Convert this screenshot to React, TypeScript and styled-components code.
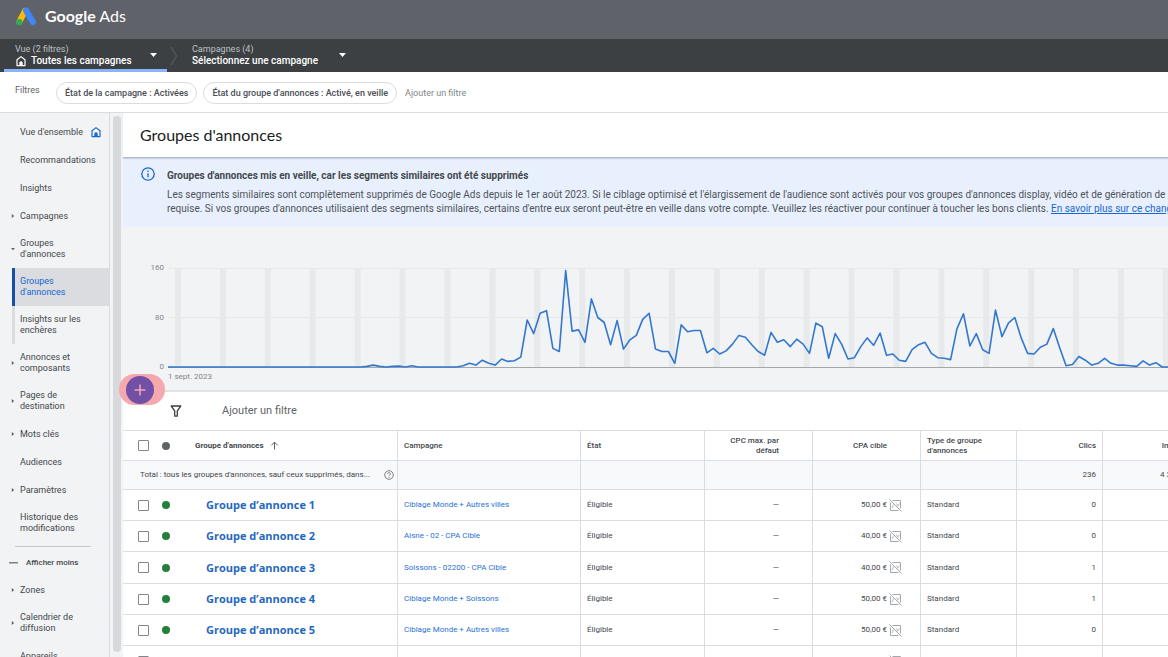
import React from 'react';
import styled, { createGlobalStyle, css } from 'styled-components';

const GlobalStyle = createGlobalStyle`
  *, *::before, *::after { box-sizing: border-box; }
  body {
    margin: 0;
    background: #f1f3f4;
    color: #44484c;
    font: 9px/12px Roboto, 'Liberation Sans', sans-serif;
  }
  button {
    margin: 0;
    padding: 0;
    border: 0;
    background: none;
    color: inherit;
    font: inherit;
    text-align: left;
    cursor: pointer;
  }
  a { color: inherit; text-decoration: none; }
  svg { display: block; flex: none; }
`;

const Shell = styled.div`
  display: flex;
  flex-direction: column;
  height: 100vh;
  overflow: hidden;
`;

/* ---------- top bars ---------- */

const Header = styled.header`
  display: flex;
  flex: none;
  align-items: center;
  gap: 9px;
  height: 39px;
  padding: 0 16px 7px;
  background: #5f6269;
  color: #fff;
`;

const Brand = styled.span`
  font: 400 16px/20px Lato, Roboto, sans-serif;
  strong { font-weight: 700; }
`;

const ScopeBar = styled.nav`
  display: flex;
  flex: none;
  align-items: stretch;
  height: 33px;
  padding-left: 4px;
  background: #3c4043;
`;

const ScopeButton = styled.button<{ $active?: boolean }>`
  display: flex;
  align-items: center;
  justify-content: space-between;
  width: ${(p) => (p.$active ? 163 : 175)}px;
  padding: 2px 10px 0 11px;
  border-bottom: 3px solid ${(p) => (p.$active ? '#8ab4f8' : 'transparent')};
  color: #fff;
`;

const ScopeText = styled.span`
  display: flex;
  flex-direction: column;
`;

const ScopeLabel = styled.span`
  color: #bdc1c6;
  font-size: 9px;
  line-height: 12px;
`;

const ScopeValue = styled.span`
  display: flex;
  align-items: center;
  gap: 4px;
  font-size: 10px;
  font-weight: 500;
  line-height: 12px;
`;

const ScopeDivider = styled.span`
  display: flex;
  align-items: center;
  padding: 0 3px;
  color: #6b6f73;
`;

const FilterBar = styled.div`
  display: flex;
  flex: none;
  align-items: flex-start;
  height: 41px;
  padding: 10px 15px 0;
  border-bottom: 1px solid #dadce0;
  background: #fff;
`;

const FilterTitle = styled.span`
  width: 41px;
  color: #5f6368;
  line-height: 16px;
`;

const Chip = styled.button`
  height: 22px;
  margin-right: 6px;
  padding: 0 8px;
  border: 1px solid #dadce0;
  border-radius: 11px;
  color: #4a4e53;
  font-weight: 500;
`;

const AddFilter = styled.button`
  height: 22px;
  padding-left: 2px;
  color: #80868b;
`;

/* ---------- side navigation ---------- */

const Body = styled.div`
  display: flex;
  flex: 1;
  min-height: 0;
`;

const Sidebar = styled.nav`
  flex: none;
  width: 110px;
  padding-top: 5px;
  border-right: 1px solid #dadce0;
  overflow: hidden;
`;

const NavLink = styled.a<{ $level?: 'child' | 'active' }>`
  display: grid;
  grid-template-columns: 20px auto 1fr;
  align-items: center;
  min-height: 28px;
  padding: 8px 0;
  line-height: 11px;
  white-space: pre-line;
  ${(p) =>
    p.$level &&
    css`
      margin-left: 12px;
      border-left: 3px solid ${p.$level === 'active' ? '#174ea6' : '#dadce0'};
      background: ${p.$level === 'active' ? '#dadce0' : 'transparent'};
      color: ${p.$level === 'active' ? '#1967d2' : 'inherit'};
      grid-template-columns: 5px auto 1fr;
    `}
`;

const NavMark = styled.span`
  display: flex;
  justify-content: flex-end;
  padding-right: 5px;
`;

const NavIcon = styled.span`
  padding-left: 7px;
`;

const NavRule = styled.hr`
  margin: 4px 18px 3px 15px;
  border: 0;
  border-top: 1px solid #c4c7cb;
`;

const LessButton = styled.button`
  display: flex;
  align-items: center;
  gap: 7px;
  height: 26px;
  padding-left: 9px;
  font-size: 8px;
  font-weight: 500;
`;

const Gutter = styled.div`
  flex: none;
  width: 13px;
  padding: 3px 2px 5px 3px;
`;

const ScrollThumb = styled.div`
  height: 100%;
  border-radius: 4px;
  background: #d7d9dd;
`;

/* ---------- main ---------- */

const Main = styled.main`
  display: flex;
  flex: 1;
  flex-direction: column;
  min-width: 0;
`;

const TitleBar = styled.div`
  flex: none;
  height: 45px;
  padding: 12px 17px;
  border-bottom: 1px solid #b4bccb;
  background: #fff;
  box-shadow: 0 1px 1px #c9d0de;
  z-index: 1;
`;

const Title = styled.h1`
  margin: 0;
  color: #202124;
  font: 400 16px/20px Lato, Roboto, sans-serif;
`;

const Notice = styled.section`
  display: flex;
  flex: none;
  gap: 12px;
  height: 69px;
  padding: 9px 18px 0;
  background: #e8f0fe;
  font-size: 10px;
  line-height: 14px;
  white-space: nowrap;
`;

const NoticeTitle = styled.h2`
  margin: 2px 0 5px;
  font-size: 10px;
  font-weight: 700;
`;

const NoticeText = styled.p`
  margin: 0;
  color: #4f5358;
  a { color: #1967d2; text-decoration: underline; }
`;

const ChartPanel = styled.section`
  position: relative;
  display: grid;
  flex: none;
  grid-template-columns: 41px 1fr;
  column-gap: 4px;
  height: 165px;
  padding-top: 35px;
  border-bottom: 2px solid #e0e2e4;
  color: #80868b;
  font-size: 8px;
`;

const AxisLabels = styled.div`
  display: flex;
  flex-direction: column;
  justify-content: space-between;
  height: 111px;
  text-align: right;
`;

const Plot = styled.div`
  min-width: 0;
  padding-top: 5px;
  overflow: hidden;
`;

const AxisDate = styled.span`
  display: block;
  margin-top: 2px;
  line-height: 12px;
`;

const CreateHalo = styled.div`
  position: absolute;
  bottom: -15px;
  left: -4px;
  display: flex;
  align-items: center;
  width: 46px;
  height: 31px;
  padding-left: 7px;
  border-radius: 16px;
  background: #f5a8ad;
`;

const CreateButton = styled.button`
  display: flex;
  align-items: center;
  justify-content: center;
  width: 28px;
  height: 28px;
  border-radius: 50%;
  background: #7150a5;
  color: #f3a5b4;
`;

const TableToolbar = styled.div`
  display: flex;
  flex: none;
  align-items: center;
  gap: 40px;
  height: 39px;
  padding-left: 47px;
  border-bottom: 1px solid #dadce0;
  background: #fff;
`;

const ToolbarFilter = styled.button`
  color: #5f6368;
  font-size: 11px;
`;

/* ---------- table ---------- */

const Table = styled.table`
  width: 1064px;
  min-width: 100%;
  table-layout: fixed;
  border-spacing: 0;
  background: #fff;
  font-size: 8px;
  line-height: 10px;
`;

const Row = styled.tr<{ $kind?: 'head' | 'total' }>`
  height: ${(p) => (p.$kind === 'head' ? 30 : p.$kind === 'total' ? 29 : 31)}px;
  background: ${(p) => (p.$kind === 'total' ? '#f8f9fa' : '#fff')};
  ${(p) => !p.$kind && '&:nth-child(3n) { height: 32px; }'}
`;

type CellProps = { $right?: boolean; $lead?: boolean; $pad?: number };

const cell = css<CellProps>`
  padding: 0 ${(p) => (p.$right ? p.$pad ?? 6 : 0)}px 0 ${(p) => (p.$right ? 0 : p.$pad ?? 6)}px;
  border-bottom: 1px solid #dadce0;
  border-right: ${(p) => (p.$lead ? '0' : '1px solid #dadce0')};
  text-align: ${(p) => (p.$right ? 'right' : 'left')};
  vertical-align: middle;
`;

const Th = styled.th<CellProps>`
  ${cell}
  font-weight: 500;
  white-space: pre-line;
`;

const Td = styled.td<CellProps>`
  ${cell}
  white-space: nowrap;
`;

const Check = styled.input.attrs({ type: 'checkbox' })`
  display: block;
  width: 11px;
  height: 11px;
  margin: 0;
  border: 1px solid #80868b;
  border-radius: 1px;
  appearance: none;
  background: #fff;
`;

const Dot = styled.span<{ $on?: boolean }>`
  display: block;
  width: 8px;
  height: 8px;
  border-radius: 50%;
  background: ${(p) => (p.$on ? '#22803a' : '#5f6368')};
`;

const SortButton = styled.button`
  display: flex;
  align-items: center;
  gap: 6px;
  font-weight: 700;
`;

const TotalLabel = styled.span`
  display: flex;
  align-items: center;
  justify-content: space-between;
  padding-right: 3px;
`;

const GroupLink = styled.a`
  color: #1f68c0;
  font: 700 11px/16px 'Open Sans', 'Noto Sans', sans-serif;
`;

const CampaignLink = styled.a`
  color: #2a72d4;
`;

const Price = styled.span`
  display: flex;
  align-items: center;
  justify-content: flex-end;
  gap: 2px;
`;

/* ---------- icons ---------- */

const AdsLogo = () => (
  <svg width="20" height="19" viewBox="0 0 20 19" aria-hidden="true">
    <path d="M9 4 3.4 14.6" stroke="#fbbc04" strokeWidth="6" strokeLinecap="round" />
    <circle cx="3.3" cy="15.3" r="3.2" fill="#34a853" />
    <path d="M10.2 3.6 16.8 15" stroke="#4285f4" strokeWidth="6.2" strokeLinecap="round" />
  </svg>
);

const HomeIcon = ({ color }: { color: string }) => (
  <svg width="12" height="12" viewBox="0 0 12 12" fill="none" aria-hidden="true">
    <path d="M2 10.6V4.7L6 1.6l4 3.1v5.9z" stroke={color} strokeWidth="1.2" strokeLinejoin="round" />
    <path d="M4.3 10.6V8a1.7 1.7 0 0 1 3.4 0v2.6z" fill={color} />
  </svg>
);

const Caret = () => (
  <svg width="7" height="4" viewBox="0 0 7 4" aria-hidden="true">
    <path d="M0 0h7L3.5 4z" fill="#fff" />
  </svg>
);

const DividerIcon = () => (
  <svg width="8" height="22" viewBox="0 0 8 22" fill="none" aria-hidden="true">
    <path d="M1 2l5.5 9L1 20" stroke="currentColor" strokeWidth=".8" />
  </svg>
);

const Arrow = ({ open }: { open?: boolean }) => (
  <svg width="4" height="4" viewBox="0 0 4 4" aria-hidden="true">
    <path d={open ? 'M0 1h4L2 3.3z' : 'M.8 0v4L3.2 2z'} fill="#5f6368" />
  </svg>
);

const MinusIcon = () => (
  <svg width="10" height="2" viewBox="0 0 10 2" aria-hidden="true">
    <path d="M0 .8h9" stroke="#5f6368" strokeWidth="1.2" />
  </svg>
);

const InfoIcon = () => (
  <svg width="14" height="14" viewBox="0 0 14 14" fill="none" aria-hidden="true">
    <circle cx="7" cy="7" r="6.2" stroke="#1a67d2" strokeWidth="1.3" />
    <path d="M7 6.2v4M7 3.6v1.3" stroke="#1a67d2" strokeWidth="1.3" />
  </svg>
);

const PlusIcon = () => (
  <svg width="12" height="12" viewBox="0 0 12 12" aria-hidden="true">
    <path d="M6 .5v11M.5 6h11" stroke="currentColor" strokeWidth="1.5" />
  </svg>
);

const FunnelIcon = () => (
  <svg width="12" height="12" viewBox="0 0 12 12" fill="none" aria-hidden="true">
    <path d="M1.2 1h9.6L7.3 5.8v5.3H4.7V5.8z" stroke="#3c4043" strokeWidth="1.3" strokeLinejoin="round" />
  </svg>
);

const SortIcon = () => (
  <svg width="9" height="9" viewBox="0 0 9 9" fill="none" aria-hidden="true">
    <path d="M4.500 8.500V1.200M1.300 4.400l3.200-3.200 3.200 3.200" stroke="#5f6368" />
  </svg>
);

const HelpIcon = () => (
  <svg width="10" height="10" viewBox="0 0 10 10" fill="none" aria-hidden="true">
    <circle cx="5" cy="5" r="4.3" stroke="#70757a" strokeWidth=".9" />
    <path d="M3.600 4a1.400 1.400 0 1 1 2.100 1.200c-.5.300-.7.500-.7 1M5 7v.9" stroke="#70757a" strokeWidth=".9" />
  </svg>
);

const NoAutoIcon = () => (
  <svg width="13" height="13" viewBox="0 0 13 13" fill="none" stroke="#a4a8ac" aria-hidden="true">
    <path d="M3.500 1.500h8v8M1.500 3.500v8h8" />
    <path d="M.5.5l12 12" />
    <path d="M3 9.200l1.500-3.700M7.500 4.500l1.200 2.700L10.500 4.500" strokeWidth=".8" />
  </svg>
);

/* ---------- data ---------- */

type NavItem = {
  label: string;
  mark?: 'open' | 'closed';
  level?: 'child' | 'active';
  home?: boolean;
};

const NAV: NavItem[] = [
  { label: "Vue d'ensemble", home: true },
  { label: 'Recommandations' },
  { label: 'Insights' },
  { label: 'Campagnes', mark: 'closed' },
  { label: "Groupes\nd'annonces", mark: 'open' },
  { label: "Groupes\nd'annonces", level: 'active' },
  { label: 'Insights sur les\nenchères', level: 'child' },
  { label: 'Annonces et\ncomposants', mark: 'closed' },
  { label: 'Pages de\ndestination', mark: 'closed' },
  { label: 'Mots clés', mark: 'closed' },
  { label: 'Audiences' },
  { label: 'Paramètres', mark: 'closed' },
  { label: 'Historique des\nmodifications' },
];

const NAV_MORE: NavItem[] = [
  { label: 'Zones', mark: 'closed' },
  { label: 'Calendrier de\ndiffusion', mark: 'closed' },
  { label: 'Appareils' },
];

const ROWS = [
  { name: 'Groupe d’annonce 1', campaign: 'Ciblage Monde + Autres villes', cpa: '50,00 €', clicks: 0 },
  { name: 'Groupe d’annonce 2', campaign: 'Aisne - 02 - CPA Cible', cpa: '40,00 €', clicks: 0 },
  { name: 'Groupe d’annonce 3', campaign: 'Soissons - 02200 - CPA Cible', cpa: '40,00 €', clicks: 1 },
  { name: 'Groupe d’annonce 4', campaign: 'Ciblage Monde + Soissons', cpa: '50,00 €', clicks: 1 },
  { name: 'Groupe d’annonce 5', campaign: 'Ciblage Monde + Autres villes', cpa: '50,00 €', clicks: 0 },
  { name: '', campaign: '', cpa: '50,00 €', clicks: 0 },
];

const COLUMNS = [34, 26, 215, 183, 124, 108, 108, 96, 86, 84];

/* Clicks per day, starting 1 September 2023 */
const CLICKS: number[] = [
  ...Array(31).fill(0),
  1, 3, 1, 0, 1, 1.5, 0, 2, 0, 0, 0, 0, 0, 0, 0, 2, 6, 3, 11, 6, 3, 13, 9, 10, 16,
  76, 54, 87, 91, 30, 25, 156, 58, 60, 40, 110, 80, 72, 36, 75, 29, 44, 51, 77, 87,
  29, 25, 25, 6, 68, 57, 59, 59, 23, 30, 21, 26, 37, 51, 48, 36, 25, 19, 56, 40, 44,
  33, 45, 37, 22, 71, 65, 14, 54, 37, 13, 15, 33, 47, 35, 55, 19, 21, 11, 9, 28, 36,
  40, 22, 15, 14, 12, 62, 86, 34, 54, 28, 22, 92, 49, 71, 80, 47, 22, 21, 32, 37, 62,
  31, 2, 4, 17, 11, 3, 6, 14, 6, 3, 3, 2, 1, 10, 3, 7, 0, 0, 0,
];

const DAY = 6.415;
const AXIS_MAX = 160;
const PLOT_HEIGHT = 99;

const ClicksChart = () => {
  const width = CLICKS.length * DAY;
  const points = CLICKS.map(
    (v, i) => `${(i * DAY).toFixed(1)},${(1 + PLOT_HEIGHT * (1 - v / AXIS_MAX)).toFixed(1)}`,
  ).join(' ');
  const weekends = Array.from({ length: Math.floor(CLICKS.length / 7) + 1 }, (_, i) => 7 + i * DAY * 7);
  return (
    <svg width={width} height="102" viewBox={`0 0 ${width} 102`} fill="none" role="img" aria-label="Clics par jour">
      {weekends.map((x) => (
        <rect key={x} x={x} y="1" width="6" height={PLOT_HEIGHT} fill="#e7e9eb" />
      ))}
      <path d={`M0 1.500H${width}M0 50.500H${width}`} stroke="#e6e8ea" />
      <path d={`M0 100.500H${width}`} stroke="#a4a7aa" />
      <polyline points={points} stroke="#3377cf" strokeWidth="1.6" strokeLinejoin="round" />
    </svg>
  );
};

const NavEntry = ({ item }: { item: NavItem }) => (
  <NavLink href="#" $level={item.level}>
    <NavMark>{item.mark && <Arrow open={item.mark === 'open'} />}</NavMark>
    <span>{item.label}</span>
    <NavIcon>{item.home && <HomeIcon color="#1967d2" />}</NavIcon>
  </NavLink>
);

export default function App() {
  return (
    <Shell>
      <GlobalStyle />
      <Header>
        <AdsLogo />
        <Brand>
          <strong>Google</strong> Ads
        </Brand>
      </Header>

      <ScopeBar>
        <ScopeButton $active>
          <ScopeText>
            <ScopeLabel>Vue (2 filtres)</ScopeLabel>
            <ScopeValue>
              <HomeIcon color="#fff" />
              Toutes les campagnes
            </ScopeValue>
          </ScopeText>
          <Caret />
        </ScopeButton>
        <ScopeDivider>
          <DividerIcon />
        </ScopeDivider>
        <ScopeButton>
          <ScopeText>
            <ScopeLabel>Campagnes (4)</ScopeLabel>
            <ScopeValue>Sélectionnez une campagne</ScopeValue>
          </ScopeText>
          <Caret />
        </ScopeButton>
      </ScopeBar>

      <FilterBar>
        <FilterTitle>Filtres</FilterTitle>
        <Chip>État de la campagne : Activées</Chip>
        <Chip>État du groupe d'annonces : Activé, en veille</Chip>
        <AddFilter>Ajouter un filtre</AddFilter>
      </FilterBar>

      <Body>
        <Sidebar>
          {NAV.map((item, i) => (
            <NavEntry key={i} item={item} />
          ))}
          <NavRule />
          <LessButton>
            <MinusIcon />
            Afficher moins
          </LessButton>
          {NAV_MORE.map((item) => (
            <NavEntry key={item.label} item={item} />
          ))}
        </Sidebar>
        <Gutter>
          <ScrollThumb />
        </Gutter>

        <Main>
          <TitleBar>
            <Title>Groupes d'annonces</Title>
          </TitleBar>

          <Notice>
            <InfoIcon />
            <div>
              <NoticeTitle>
                Groupes d'annonces mis en veille, car les segments similaires ont été supprimés
              </NoticeTitle>
              <NoticeText>
                Les segments similaires sont complètement supprimés de Google Ads depuis le 1er août 2023. Si le
                ciblage optimisé et l'élargissement de l'audience sont activés pour vos groupes d'annonces display,
                vidéo et de génération de la demande, aucune action n'est
                <br />
                requise. Si vos groupes d'annonces utilisaient des segments similaires, certains d'entre eux seront
                peut-être en veille dans votre compte. Veuillez les réactiver pour continuer à toucher les bons
                clients. <a href="#">En savoir plus sur ce changement</a>
              </NoticeText>
            </div>
          </Notice>

          <ChartPanel>
            <AxisLabels>
              <span>160</span>
              <span>80</span>
              <span>0</span>
            </AxisLabels>
            <Plot>
              <ClicksChart />
              <AxisDate>1 sept. 2023</AxisDate>
            </Plot>
            <CreateHalo>
              <CreateButton aria-label="Créer un groupe d'annonces">
                <PlusIcon />
              </CreateButton>
            </CreateHalo>
          </ChartPanel>

          <TableToolbar>
            <FunnelIcon />
            <ToolbarFilter>Ajouter un filtre</ToolbarFilter>
          </TableToolbar>

          <Table>
            <colgroup>
              {COLUMNS.map((w, i) => (
                <col key={i} width={w} />
              ))}
            </colgroup>
            <thead>
              <Row $kind="head">
                <Th $lead $pad={15}>
                  <Check aria-label="Tout sélectionner" />
                </Th>
                <Th $lead $pad={5}>
                  <Dot />
                </Th>
                <Th $pad={12}>
                  <SortButton>
                    Groupe d'annonces
                    <SortIcon />
                  </SortButton>
                </Th>
                <Th>Campagne</Th>
                <Th>État</Th>
                <Th $right $pad={33}>{'CPC max. par\ndéfaut'}</Th>
                <Th $right $pad={33}>CPA cible</Th>
                <Th>{"Type de groupe\nd'annonces"}</Th>
                <Th $right>Clics</Th>
                <Th $right>Impr.</Th>
              </Row>
            </thead>
            <tbody>
              <Row $kind="total">
                <Td colSpan={3} $pad={17}>
                  <TotalLabel>
                    Total : tous les groupes d'annonces, sauf ceux supprimés, dans...
                    <HelpIcon />
                  </TotalLabel>
                </Td>
                <Td />
                <Td />
                <Td />
                <Td />
                <Td />
                <Td $right>236</Td>
                <Td $right>4 322</Td>
              </Row>
            </tbody>
            <tbody>
              {ROWS.map((row, i) => (
                <Row key={i}>
                  <Td $lead $pad={15}>
                    <Check aria-label={`Sélectionner ${row.name}`} />
                  </Td>
                  <Td $lead $pad={5}>
                    <Dot $on />
                  </Td>
                  <Td $pad={23}>
                    <GroupLink href="#">{row.name}</GroupLink>
                  </Td>
                  <Td>
                    <CampaignLink href="#">{row.campaign}</CampaignLink>
                  </Td>
                  <Td>Éligible</Td>
                  <Td $right $pad={33}>—</Td>
                  <Td $right $pad={18}>
                    <Price>
                      {row.cpa}
                      <NoAutoIcon />
                    </Price>
                  </Td>
                  <Td>Standard</Td>
                  <Td $right>{row.clicks}</Td>
                  <Td $right />
                </Row>
              ))}
            </tbody>
          </Table>
        </Main>
      </Body>
    </Shell>
  );
}
